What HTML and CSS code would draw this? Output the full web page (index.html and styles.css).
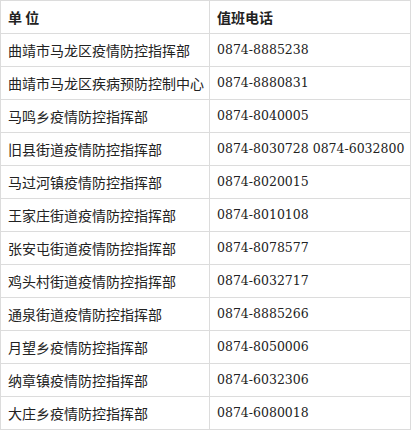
FILE: index.html
```html
<!DOCTYPE html>
<html lang="zh">
<head>
<meta charset="utf-8">
<link rel="stylesheet" href="styles.css">
</head>
<body>
<table class="duty">
  <colgroup><col class="c-unit"><col class="c-tel"></colgroup>
  <thead>
    <tr><th>单 位</th><th>值班电话</th></tr>
  </thead>
  <tbody>
    <tr><td>曲靖市马龙区疫情防控指挥部</td><td class="tel">0874-8885238</td></tr>
    <tr><td>曲靖市马龙区疾病预防控制中心</td><td class="tel">0874-8880831</td></tr>
    <tr><td>马鸣乡疫情防控指挥部</td><td class="tel">0874-8040005</td></tr>
    <tr><td>旧县街道疫情防控指挥部</td><td class="tel">0874-8030728 0874-6032800</td></tr>
    <tr><td>马过河镇疫情防控指挥部</td><td class="tel">0874-8020015</td></tr>
    <tr><td>王家庄街道疫情防控指挥部</td><td class="tel">0874-8010108</td></tr>
    <tr><td>张安屯街道疫情防控指挥部</td><td class="tel">0874-8078577</td></tr>
    <tr><td>鸡头村街道疫情防控指挥部</td><td class="tel">0874-6032717</td></tr>
    <tr><td>通泉街道疫情防控指挥部</td><td class="tel">0874-8885266</td></tr>
    <tr><td>月望乡疫情防控指挥部</td><td class="tel">0874-8050006</td></tr>
    <tr><td>纳章镇疫情防控指挥部</td><td class="tel">0874-6032306</td></tr>
    <tr><td>大庄乡疫情防控指挥部</td><td class="tel">0874-6080018</td></tr>
  </tbody>
</table>
</body>
</html>
```

FILE: styles.css
```css
html, body {
  margin: 0;
  padding: 0;
  background: #fff;
}

.duty {
  border-collapse: collapse;
  width: 410px;
  table-layout: fixed;
  color: #222;
  font-family: "Noto Sans CJK SC", sans-serif;
  font-size: 14px;
}

.c-unit { width: 209px; }
.c-tel { width: 201px; }

.duty th,
.duty td {
  border: 1px solid #dcdcdc;
  padding: 8px 7px;
  line-height: 16px;
  text-align: left;
  white-space: nowrap;
  overflow: hidden;
}

.duty th {
  font-weight: bold;
}

.duty td.tel {
  font-family: "DejaVu Serif", "Noto Sans CJK SC", serif;
  font-size: 12.5px;
}
```
